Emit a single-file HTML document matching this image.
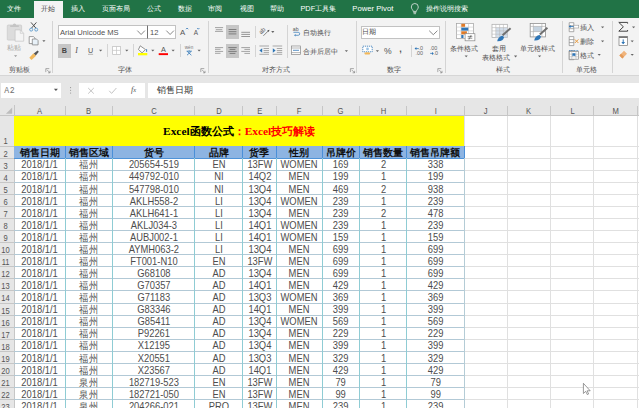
<!DOCTYPE html><html><head><meta charset="utf-8"><style>
*{margin:0;padding:0;box-sizing:border-box}
html,body{width:639px;height:408px;overflow:hidden;background:#fff;font-family:"Liberation Sans",sans-serif}
.ab{position:absolute}
.t{position:absolute;white-space:nowrap;line-height:1}
</style></head><body>
<div class="ab" style="left:0;top:0;width:639px;height:18px;background:#217346"></div>
<div class="ab" style="left:33.5px;top:1px;width:29.6px;height:18px;background:#F3F3F3"></div>
<div class="t" style="left:7px;top:5.2px;font-size:7.3px;color:#fff">文件</div>
<div class="t" style="left:40.5px;top:5.2px;font-size:7.3px;color:#444">开始</div>
<div class="t" style="left:71.2px;top:5.2px;font-size:7.3px;color:#fff">插入</div>
<div class="t" style="left:101.9px;top:5.2px;font-size:7.3px;color:#fff">页面布局</div>
<div class="t" style="left:146.5px;top:5.2px;font-size:7.3px;color:#fff">公式</div>
<div class="t" style="left:177.5px;top:5.2px;font-size:7.3px;color:#fff">数据</div>
<div class="t" style="left:208px;top:5.2px;font-size:7.3px;color:#fff">审阅</div>
<div class="t" style="left:239.5px;top:5.2px;font-size:7.3px;color:#fff">视图</div>
<div class="t" style="left:270px;top:5.2px;font-size:7.3px;color:#fff">帮助</div>
<div class="t" style="left:300.5px;top:5.2px;font-size:7.3px;color:#fff">PDF工具集</div>
<div class="t" style="left:352.3px;top:5.2px;font-size:7.7px;color:#fff">Power Pivot</div>
<div class="t" style="left:425.5px;top:5.2px;font-size:7.3px;color:#fff">操作说明搜索</div>
<div class="ab" style="left:0;top:18px;width:639px;height:57px;background:#F3F3F3"></div>
<div class="ab" style="left:0;top:74.6px;width:639px;height:1px;background:#D6D6D6"></div>
<div class="t" style="left:7.08px;top:43.82px;font-size:7.3px;color:#A8A8A8;">粘贴</div>
<div class="t" style="left:9.28px;top:65.72px;font-size:7.3px;color:#505050;">剪贴板</div>
<div class="ab" style="left:52.30px;top:21.00px;width:1px;height:52.00px;background:#D4D4D4"></div>
<div class="ab" style="left:58.3px;top:25.3px;width:89.3px;height:13.4px;background:#fff;border:0.8px solid #C2C2C2"></div>
<div class="ab" style="left:147.1px;top:25.3px;width:29.3px;height:13.4px;background:#fff;border:0.8px solid #C2C2C2;border-left:1px solid #707070"></div>
<div class="t" style="left:60.00px;top:28.90px;font-size:7.6px;color:#505050;">Arial Unicode MS</div>
<div class="t" style="left:150.00px;top:28.90px;font-size:7.6px;color:#505050;">12</div>
<div class="t" style="left:180.00px;top:28.60px;font-size:7.8px;color:#555;">A</div>
<div class="t" style="left:193.80px;top:30.00px;font-size:6.4px;color:#555;">A</div>
<div class="ab" style="left:58.3px;top:44px;width:12.5px;height:13.8px;background:#C6C6C6"></div>
<div class="t" style="left:61.80px;top:46.60px;font-size:7.2px;color:#444;font-weight:bold">B</div>
<div class="t" style="left:75.20px;top:47.20px;font-size:7.8px;color:#505050;font-style:italic;font-family:'Liberation Serif',serif">I</div>
<div class="t" style="left:88.00px;top:46.60px;font-size:7.2px;color:#555;">U</div>
<div class="ab" style="left:107.30px;top:44.30px;width:1px;height:12.70px;background:#D4D4D4"></div>
<div class="ab" style="left:133.40px;top:44.30px;width:1px;height:12.70px;background:#D4D4D4"></div>
<div class="t" style="left:161.00px;top:46.20px;font-size:7.3px;color:#555;">A</div>
<div class="ab" style="left:179.70px;top:44.30px;width:1px;height:12.70px;background:#D4D4D4"></div>
<div class="t" style="left:184.80px;top:45.80px;font-size:4.6px;color:#777;">wén</div>
<div class="t" style="left:117.78px;top:65.72px;font-size:7.3px;color:#505050;">字体</div>
<div class="ab" style="left:207.50px;top:21.00px;width:1px;height:52.00px;background:#D4D4D4"></div>
<div class="ab" style="left:226px;top:25.1px;width:13px;height:13.8px;background:#C6C6C6"></div>
<div class="ab" style="left:226px;top:43.9px;width:13px;height:13.7px;background:#C6C6C6"></div>
<div class="ab" style="left:255.20px;top:26.40px;width:1px;height:11.80px;background:#D4D4D4"></div>
<div class="ab" style="left:286.60px;top:24.50px;width:1px;height:33.00px;background:#D4D4D4"></div>
<div class="ab" style="left:255.20px;top:44.50px;width:1px;height:12.50px;background:#D4D4D4"></div>
<div class="t" style="left:292.80px;top:26.80px;font-size:5.2px;color:#555;">ab</div>
<div class="t" style="left:302.88px;top:29.22px;font-size:7.35px;color:#505050;">自动换行</div>
<div class="t" style="left:302.88px;top:47.52px;font-size:7.35px;color:#505050;">合并后居中</div>
<div class="t" style="left:261.78px;top:65.92px;font-size:7.3px;color:#505050;">对齐方式</div>
<div class="ab" style="left:355.60px;top:21.00px;width:1px;height:52.00px;background:#D4D4D4"></div>
<div class="ab" style="left:360.9px;top:25.5px;width:78.9px;height:13.4px;background:#fff;border:0.8px solid #C2C2C2"></div>
<div class="t" style="left:362.48px;top:28.24px;font-size:7.2px;color:#444;">日期</div>
<div class="t" style="left:384.00px;top:46.90px;font-size:8.6px;color:#555;">%</div>
<div class="t" style="left:399.20px;top:44.60px;font-size:9px;color:#555;font-weight:bold">,</div>
<div class="ab" style="left:410.60px;top:45.00px;width:1px;height:12.00px;background:#D4D4D4"></div>
<div class="t" style="left:418.60px;top:46.00px;font-size:5.4px;color:#666;">.0</div>
<div class="t" style="left:415.60px;top:50.60px;font-size:5.4px;color:#666;">.00</div>
<div class="t" style="left:429.80px;top:46.00px;font-size:5.4px;color:#666;">.00</div>
<div class="t" style="left:433.40px;top:50.60px;font-size:5.4px;color:#666;">.0</div>
<div class="t" style="left:387.48px;top:65.92px;font-size:7.3px;color:#505050;">数字</div>
<div class="ab" style="left:444.50px;top:21.00px;width:1px;height:52.00px;background:#D4D4D4"></div>
<div class="t" style="left:450.38px;top:44.52px;font-size:7.35px;color:#505050;">条件格式</div>
<div class="t" style="left:492.48px;top:44.52px;font-size:7.35px;color:#505050;">套用</div>
<div class="t" style="left:482.18px;top:53.62px;font-size:7.35px;color:#505050;">表格格式</div>
<div class="t" style="left:519.68px;top:44.52px;font-size:7.35px;color:#505050;">单元格样式</div>
<div class="t" style="left:495.58px;top:65.92px;font-size:7.3px;color:#505050;">样式</div>
<div class="ab" style="left:562.40px;top:21.00px;width:1px;height:52.00px;background:#D4D4D4"></div>
<div class="t" style="left:580.38px;top:23.92px;font-size:7.35px;color:#505050;">插入</div>
<div class="t" style="left:580.38px;top:37.92px;font-size:7.35px;color:#505050;">删除</div>
<div class="t" style="left:580.38px;top:51.72px;font-size:7.35px;color:#505050;">格式</div>
<div class="t" style="left:576.08px;top:65.52px;font-size:7.3px;color:#505050;">单元格</div>
<div class="ab" style="left:611.50px;top:21.00px;width:1px;height:52.00px;background:#D4D4D4"></div>
<svg class="ab" style="left:0;top:0" width="639" height="80" viewBox="0 0 639 80"><rect x="7.3" y="25" width="14.3" height="15.1" rx="0.8" fill="#DCDCDC" stroke="#C8C8C8" stroke-width="0.7"/><path d="M10.2 27V25.2h2.6a1.7 1.7 0 0 1 3.4 0h2.6V27z" fill="#C4C4C4"/><path d="M15.1 29.9h5.2l3.4 3.4v7.9h-8.6z" fill="#F4F4F4" stroke="#C4C4C4" stroke-width="0.7"/><path d="M20.3 29.9v3.4h3.4" fill="none" stroke="#C4C4C4" stroke-width="0.6"/><path d="M14.00 55.20h3.2l-1.6 1.8z" fill="#9A9A9A"/><path d="M31 22.4l4.8 5.6M36.4 22.4l-4.8 5.6" stroke="#505050" stroke-width="1"/><circle cx="31.2" cy="29.6" r="1.5" fill="none" stroke="#4A90C8" stroke-width="0.8"/><circle cx="36.2" cy="29.6" r="1.5" fill="none" stroke="#4A90C8" stroke-width="0.8"/><path d="M29.2 36.6h4.2l1.6 1.6v5.4h-5.8z" fill="#fff" stroke="#777" stroke-width="0.7"/><path d="M32.3 39h4.2l1.6 1.6v4.3h-5.8z" fill="#E8F1F8" stroke="#777" stroke-width="0.7"/><path d="M42.30 40.20h3.2l-1.6 1.8z" fill="#666"/><path d="M29.3 57.8l4.2-4.6 2.6 2.6-4.6 4.2z" fill="#F2B85A"/><path d="M33.8 53.5l3.8-3 1.2 1.2-3 3.8z" fill="#555"/><path d="M45.80 72.10v-3.5h3.5M47.00 69.80l3 3M50.00 70.80v2h-2" stroke="#777" stroke-width="0.6" fill="none"/><path d="M137.3 30.6l3.8 3.9 3.8-3.9" fill="none" stroke="#555" stroke-width="0.7"/><path d="M166.3 30.6l3.8 3.9 3.8-3.9" fill="none" stroke="#555" stroke-width="0.7"/><path d="M186 29.2l1.1-1.2 1.1 1.2" fill="none" stroke="#2E75B6" stroke-width="0.8"/><path d="M197.2 28l1.1 1.2 1.1-1.2" fill="none" stroke="#2E75B6" stroke-width="0.8"/><path d="M88 54.3h5.1" stroke="#888" stroke-width="0.6"/><path d="M99.00 49.80h3.2l-1.6 1.8z" fill="#666"/><rect x="112.6" y="46.4" width="7.8" height="8" fill="#fff" stroke="#C4C4C4" stroke-width="0.8"/><path d="M116.5 46.4v8M112.6 50.4h7.8" stroke="#C4C4C4" stroke-width="0.7"/><path d="M125.20 49.80h3.2l-1.6 1.8z" fill="#666"/><path d="M140.2 45.8l5.2 3.7-3.3 3.4-3.6-3.4z" fill="#fff" stroke="#666" stroke-width="0.7"/><path d="M146.6 49.2v2.6" stroke="#2E75B6" stroke-width="0.9"/><rect x="138" y="53" width="9.3" height="2.3" fill="#FFFF00"/><path d="M151.20 49.80h3.2l-1.6 1.8z" fill="#666"/><rect x="158.7" y="53.2" width="9.3" height="1.9" fill="#FF0000"/><path d="M171.50 49.80h3.2l-1.6 1.8z" fill="#666"/><path d="M186.6 51.2h5.2M189.2 50.4v1M187.2 51.4l4.2 3.8M191.2 51.4l-4.2 3.8" stroke="#2E75B6" stroke-width="0.8" fill="none"/><path d="M197.50 49.80h3.2l-1.6 1.8z" fill="#666"/><path d="M200.80 72.10v-3.5h3.5M202.00 69.80l3 3M205.00 70.80v2h-2" stroke="#777" stroke-width="0.6" fill="none"/><path d="M215 27.6h8.1M215.8 29.7h6.5M215 31.4h8.1" stroke="#888" stroke-width="0.75"/><path d="M228.6 29.5h7.8M228.6 31.7h7.8M228.6 33.9h7.8" stroke="#666" stroke-width="0.75"/><path d="M241.3 32.3h8.7M241.3 34.4h8.7M241.3 36.5h8.7" stroke="#777" stroke-width="0.75"/><text x="0" y="0" transform="translate(261.2 34.6) rotate(-45)" font-family="Liberation Sans" font-size="6" fill="#555">ab</text><path d="M263.4 35.8l5.6-5.6" stroke="#555" stroke-width="0.7" fill="none"/><path d="M269.4 29.8l-2.2 0.6 1.6 1.6z" fill="#555"/><path d="M271.20 31.10h3.2l-1.6 1.8z" fill="#666"/><path d="M215 47.6h8.1M215 49.3h5.5M215 51.4h8.1M215 53.3h5.5" stroke="#888" stroke-width="0.75"/><path d="M228.3 47.6h8.4M229.6 49.4h5.8M228.3 51.4h8.4M229.6 53.4h5.8" stroke="#666" stroke-width="0.75"/><path d="M241.3 47.6h8.7M244.4 49.4h5.6M241.3 51.4h8.7M244.4 53.4h5.6" stroke="#888" stroke-width="0.75"/><path d="M259.4 46h9.6M263.6 48.5h5.4M263.6 50.5h5.4M263.6 52.4h5.4M259.4 54.3h9.6" stroke="#888" stroke-width="0.7"/><path d="M259.4 50.5l2.8-2.2v4.4z" fill="#2E75B6"/><path d="M272.6 46h9.6M276.8 48.5h5.4M276.8 50.5h5.4M276.8 52.4h5.4M272.6 54.3h9.6" stroke="#888" stroke-width="0.7"/><path d="M275.6 50.5l-2.8-2.2v4.4z" fill="#2E75B6"/><path d="M293.4 32.3h4.8a1.5 1.5 0 0 1 0 3h-2.6" fill="none" stroke="#2E75B6" stroke-width="0.7"/><path d="M295.6 34.1v2.4l-1.5-1.2z" fill="#2E75B6"/><rect x="291.4" y="46" width="9.2" height="8.6" fill="#fff" stroke="#888" stroke-width="0.7"/><path d="M291.4 48h9.2M291.4 52.6h9.2" stroke="#888" stroke-width="0.6"/><path d="M293 50.3h6" stroke="#2E75B6" stroke-width="0.8"/><path d="M344.80 50.30h3.2l-1.6 1.8z" fill="#666"/><path d="M350.40 72.10v-3.5h3.5M351.60 69.80l3 3M354.60 70.80v2h-2" stroke="#777" stroke-width="0.6" fill="none"/><path d="M429.2 30.7l4.1 4 4.1-4" fill="none" stroke="#555" stroke-width="0.7"/><rect x="362.8" y="46.2" width="9.4" height="5.6" fill="#fff" stroke="#2E75B6" stroke-width="0.8" stroke-dasharray="1.2 0.8"/><circle cx="367.5" cy="49" r="1.4" fill="#9CC3E5"/><ellipse cx="367.3" cy="53.4" rx="3" ry="1.2" fill="#F2B85A"/><path d="M375.80 50.30h3.2l-1.6 1.8z" fill="#666"/><path d="M415.4 48.6h3.4" stroke="#2E75B6" stroke-width="0.8"/><path d="M414.6 48.6l1.8-1.5v3z" fill="#2E75B6"/><path d="M430.2 53.4h2.8" stroke="#2E75B6" stroke-width="0.8"/><path d="M433.8 53.4l-1.8-1.5v3z" fill="#2E75B6"/><path d="M437.80 72.10v-3.5h3.5M439.00 69.80l3 3M442.00 70.80v2h-2" stroke="#777" stroke-width="0.6" fill="none"/><rect x="456.5" y="23.4" width="17" height="15" fill="#fff" stroke="#A0A0A0" stroke-width="0.7"/><path d="M456.5 27.1h17M456.5 30.9h17M456.5 34.6h17M461.2 23.4v15M468.5 23.4v15" stroke="#C8C8C8" stroke-width="0.6"/><rect x="461.3" y="23.8" width="3.8" height="3" fill="#E07B28"/><rect x="461.3" y="27.6" width="7" height="3" fill="#2E75B6"/><rect x="461.3" y="31.3" width="5.6" height="3" fill="#E07B28"/><rect x="461.3" y="35" width="2.2" height="3" fill="#2E75B6"/><rect x="465.1" y="33.7" width="9.8" height="7.1" fill="#fff" stroke="#888" stroke-width="0.7"/><path d="M467.7 36.4h4.6M467.7 38.2h4.6M471.2 35l-2.3 4.6" stroke="#444" stroke-width="0.6"/><path d="M464.60 55.40h3.2l-1.6 1.8z" fill="#666"/><rect x="492" y="24.3" width="15.3" height="13.1" fill="#fff" stroke="#A8A8A8" stroke-width="0.7"/><rect x="495.8" y="27.6" width="11.5" height="9.8" fill="#D3DEEA"/><path d="M492 27.6h15.3M492 30.9h15.3M492 34.2h15.3M495.8 24.3v13.1M499.6 24.3v13.1M503.4 24.3v13.1" stroke="#B8B8B8" stroke-width="0.6"/><path d="M502.6 35.2l8-7" stroke="#707070" stroke-width="2"/><path d="M497.2 41.2c0.6-3 2.6-5 5.4-5.4l1.4 1.4c-0.5 2.8-2.6 4.2-6.8 4z" fill="#2E75B6"/><path d="M514.00 55.60h3.2l-1.6 1.8z" fill="#666"/><rect x="530.2" y="23.4" width="15.3" height="13.5" fill="#fff" stroke="#909090" stroke-width="0.8"/><rect x="533.3" y="26.4" width="8.6" height="5.2" fill="#C5D3E0"/><path d="M530.2 26.4h15.3M530.2 31.6h15.3M533.3 23.4v13.5M541.9 23.4v13.5" stroke="#A8A8A8" stroke-width="0.6"/><path d="M539.8 34.6l7.6-6.8" stroke="#707070" stroke-width="2"/><path d="M534.2 40.4c0.6-3 2.6-5 5.4-5.4l1.4 1.4c-0.5 2.8-2.6 4.2-6.8 4z" fill="#2E75B6"/><path d="M538.00 55.40h3.2l-1.6 1.8z" fill="#666"/><path d="M569.2 22.7h4.6v9h-4.6zM569.2 25.7h4.6M569.2 28.7h4.6" fill="#fff" stroke="#888" stroke-width="0.7"/><path d="M569.2 36.6h4.6v9h-4.6zM569.2 39.6h4.6M569.2 42.6h4.6" fill="#fff" stroke="#888" stroke-width="0.7"/><path d="M569.2 50.7h4.6v9h-4.6zM569.2 53.7h4.6M569.2 56.7h4.6" fill="#fff" stroke="#888" stroke-width="0.7"/><rect x="573.8" y="25.2" width="4.9" height="2.8" fill="#fff" stroke="#999" stroke-width="0.6"/><path d="M569.4 26.6h4.2" stroke="#2E75B6" stroke-width="0.9"/><path d="M568.8 26.6l1.8-1.5v3z" fill="#2E75B6"/><path d="M574.8 39.4l3.6 3.6M578.4 39.4l-3.6 3.6" stroke="#E89A3C" stroke-width="1"/><path d="M569.2 50.6h9.4" stroke="#2E75B6" stroke-width="0.8" stroke-dasharray="1 0.6"/><rect x="569.2" y="51.6" width="9.4" height="7.6" fill="#fff" stroke="#888" stroke-width="0.7"/><path d="M569.2 54.2h9.4M569.2 56.8h9.4M571.8 51.6v7.6M576 51.6v7.6" stroke="#AAA" stroke-width="0.5"/><path d="M572.4 53.2h3v3.4l-1.5-1-1.5 1z" fill="#2E75B6"/><path d="M601.00 26.50h3.2l-1.6 1.8z" fill="#666"/><path d="M601.00 40.40h3.2l-1.6 1.8z" fill="#666"/><path d="M597.60 54.00h3.2l-1.6 1.8z" fill="#666"/><path d="M627.6 23.6v-1.2h-8.8l4.6 4.4-4.6 4.4h8.8v-1.2" fill="none" stroke="#444" stroke-width="1.0"/><path d="M632.00 26.50h3.2l-1.6 1.8z" fill="#666"/><rect x="619" y="36.4" width="8.4" height="9.2" fill="#fff" stroke="#777" stroke-width="0.7"/><rect x="619" y="36.4" width="8.4" height="1.6" fill="#777"/><path d="M623.2 39.4v4.2" stroke="#2E75B6" stroke-width="1"/><path d="M621.3 42l1.9 2.3 1.9-2.3z" fill="#2E75B6"/><path d="M630.60 40.40h3.2l-1.6 1.8z" fill="#666"/><path d="M619.4 55.4l4.6-4.6 3 3-4.6 4.6z" fill="#F0B47C"/><path d="M619.4 55.4l1.6-1.6 3 3-1.6 1.6z" fill="#E39A5A"/><path d="M630.60 54.00h3.2l-1.6 1.8z" fill="#666"/></svg>
<div class="ab" style="left:0;top:75.5px;width:639px;height:30px;background:#E6E6E6"></div>
<div class="ab" style="left:1px;top:82.6px;width:60.1px;height:15.4px;background:#fff"></div>
<div class="ab" style="left:79.2px;top:82.6px;width:66px;height:15.4px;background:#fff"></div>
<div class="ab" style="left:147.7px;top:82.6px;width:500px;height:15.4px;background:#fff"></div>
<div class="t" style="left:4.3px;top:87.4px;font-size:8.2px;color:#707070;letter-spacing:0.6px;font-family:'Liberation Mono',monospace">A2</div>
<div class="t" style="left:156.6px;top:86.0px;font-size:9px;color:#333">销售日期</div>
<svg class="ab" style="left:0;top:76px" width="160" height="26" viewBox="0 76 160 26"><path d="M53.9 88.7h4l-2 2.2z" fill="#555"/><circle cx="70.6" cy="87.6" r="0.55" fill="#888"/><circle cx="70.6" cy="90.3" r="0.55" fill="#888"/><circle cx="70.6" cy="93" r="0.55" fill="#888"/><path d="M88.2 88l5.6 5.6M93.8 88l-5.6 5.6" stroke="#B4B4B4" stroke-width="0.8"/><path d="M109.2 90.8l2.4 2.6 4.8-5.4" fill="none" stroke="#B4B4B4" stroke-width="0.8"/></svg>
<div class="t" style="left:131.0px;top:86.0px;font-size:8.4px;color:#555;font-style:italic;font-family:'Liberation Serif',serif">f<span style="font-size:6.5px">x</span></div>
<div class="ab" style="left:0;top:105px;width:639px;height:11px;background:#E6E6E6"></div>
<div class="ab" style="left:0;top:105px;width:14.3px;height:303px;background:#E6E6E6"></div>
<div class="ab" style="left:14.3px;top:116px;width:625px;height:292px;background:#fff"></div>
<div class="ab" style="left:0;top:115px;width:639px;height:1px;background:#C6C6C6"></div>
<div class="ab" style="left:14px;top:105px;width:1px;height:303px;background:#C6C6C6"></div>
<svg class="ab" style="left:0;top:100px" width="16" height="16" viewBox="0 100 16 16"><path d="M12.2 107.5v6.3h-6.3z" fill="#BDBDBD"/></svg>
<div class="t" style="left:14.3px;width:51.10000000000001px;text-align:center;top:107.0px;font-size:8.9px;color:#555;transform:scaleX(0.86)">A</div>
<div class="ab" style="left:64.9px;top:105.5px;width:1px;height:10px;background:#C6C6C6"></div>
<div class="t" style="left:65.4px;width:47.3px;text-align:center;top:107.0px;font-size:8.9px;color:#555;transform:scaleX(0.86)">B</div>
<div class="ab" style="left:112.2px;top:105.5px;width:1px;height:10px;background:#C6C6C6"></div>
<div class="t" style="left:112.7px;width:81.8px;text-align:center;top:107.0px;font-size:8.9px;color:#555;transform:scaleX(0.86)">C</div>
<div class="ab" style="left:194.0px;top:105.5px;width:1px;height:10px;background:#C6C6C6"></div>
<div class="t" style="left:194.5px;width:48.0px;text-align:center;top:107.0px;font-size:8.9px;color:#555;transform:scaleX(0.86)">D</div>
<div class="ab" style="left:242.0px;top:105.5px;width:1px;height:10px;background:#C6C6C6"></div>
<div class="t" style="left:242.5px;width:33.80000000000001px;text-align:center;top:107.0px;font-size:8.9px;color:#555;transform:scaleX(0.86)">E</div>
<div class="ab" style="left:275.8px;top:105.5px;width:1px;height:10px;background:#C6C6C6"></div>
<div class="t" style="left:276.3px;width:46.0px;text-align:center;top:107.0px;font-size:8.9px;color:#555;transform:scaleX(0.86)">F</div>
<div class="ab" style="left:321.8px;top:105.5px;width:1px;height:10px;background:#C6C6C6"></div>
<div class="t" style="left:322.3px;width:37.19999999999999px;text-align:center;top:107.0px;font-size:8.9px;color:#555;transform:scaleX(0.86)">G</div>
<div class="ab" style="left:359.0px;top:105.5px;width:1px;height:10px;background:#C6C6C6"></div>
<div class="t" style="left:359.5px;width:47.10000000000002px;text-align:center;top:107.0px;font-size:8.9px;color:#555;transform:scaleX(0.86)">H</div>
<div class="ab" style="left:406.1px;top:105.5px;width:1px;height:10px;background:#C6C6C6"></div>
<div class="t" style="left:406.6px;width:57.39999999999998px;text-align:center;top:107.0px;font-size:8.9px;color:#555;transform:scaleX(0.86)">I</div>
<div class="ab" style="left:463.5px;top:105.5px;width:1px;height:10px;background:#C6C6C6"></div>
<div class="t" style="left:464.0px;width:43.30000000000001px;text-align:center;top:107.0px;font-size:8.9px;color:#555;transform:scaleX(0.86)">J</div>
<div class="ab" style="left:506.8px;top:105.5px;width:1px;height:10px;background:#C6C6C6"></div>
<div class="t" style="left:507.3px;width:43.30000000000001px;text-align:center;top:107.0px;font-size:8.9px;color:#555;transform:scaleX(0.86)">K</div>
<div class="ab" style="left:550.1px;top:105.5px;width:1px;height:10px;background:#C6C6C6"></div>
<div class="t" style="left:550.6px;width:43.299999999999955px;text-align:center;top:107.0px;font-size:8.9px;color:#555;transform:scaleX(0.86)">L</div>
<div class="ab" style="left:593.4px;top:105.5px;width:1px;height:10px;background:#C6C6C6"></div>
<div class="t" style="left:593.9px;width:43.30000000000007px;text-align:center;top:107.0px;font-size:8.9px;color:#555;transform:scaleX(0.86)">M</div>
<div class="ab" style="left:636.7px;top:105.5px;width:1px;height:10px;background:#C6C6C6"></div>
<div class="ab" style="left:463.5px;top:116px;width:1px;height:292px;background:#E0E0E0"></div>
<div class="ab" style="left:506.8px;top:116px;width:1px;height:292px;background:#E0E0E0"></div>
<div class="ab" style="left:550.1px;top:116px;width:1px;height:292px;background:#E0E0E0"></div>
<div class="ab" style="left:593.4px;top:116px;width:1px;height:292px;background:#E0E0E0"></div>
<div class="ab" style="left:636.7px;top:116px;width:1px;height:292px;background:#E0E0E0"></div>
<div class="ab" style="left:14.3px;top:145.5px;width:625px;height:1px;background:#E0E0E0"></div>
<div class="ab" style="left:14.3px;top:157.7px;width:625px;height:1px;background:#E0E0E0"></div>
<div class="ab" style="left:14.3px;top:169.76999999999998px;width:625px;height:1px;background:#E0E0E0"></div>
<div class="ab" style="left:14.3px;top:181.83999999999997px;width:625px;height:1px;background:#E0E0E0"></div>
<div class="ab" style="left:14.3px;top:193.91px;width:625px;height:1px;background:#E0E0E0"></div>
<div class="ab" style="left:14.3px;top:205.98px;width:625px;height:1px;background:#E0E0E0"></div>
<div class="ab" style="left:14.3px;top:218.04999999999998px;width:625px;height:1px;background:#E0E0E0"></div>
<div class="ab" style="left:14.3px;top:230.12px;width:625px;height:1px;background:#E0E0E0"></div>
<div class="ab" style="left:14.3px;top:242.19px;width:625px;height:1px;background:#E0E0E0"></div>
<div class="ab" style="left:14.3px;top:254.26px;width:625px;height:1px;background:#E0E0E0"></div>
<div class="ab" style="left:14.3px;top:266.33px;width:625px;height:1px;background:#E0E0E0"></div>
<div class="ab" style="left:14.3px;top:278.4px;width:625px;height:1px;background:#E0E0E0"></div>
<div class="ab" style="left:14.3px;top:290.47px;width:625px;height:1px;background:#E0E0E0"></div>
<div class="ab" style="left:14.3px;top:302.53999999999996px;width:625px;height:1px;background:#E0E0E0"></div>
<div class="ab" style="left:14.3px;top:314.61px;width:625px;height:1px;background:#E0E0E0"></div>
<div class="ab" style="left:14.3px;top:326.68px;width:625px;height:1px;background:#E0E0E0"></div>
<div class="ab" style="left:14.3px;top:338.75px;width:625px;height:1px;background:#E0E0E0"></div>
<div class="ab" style="left:14.3px;top:350.82px;width:625px;height:1px;background:#E0E0E0"></div>
<div class="ab" style="left:14.3px;top:362.89px;width:625px;height:1px;background:#E0E0E0"></div>
<div class="ab" style="left:14.3px;top:374.96px;width:625px;height:1px;background:#E0E0E0"></div>
<div class="ab" style="left:14.3px;top:387.03px;width:625px;height:1px;background:#E0E0E0"></div>
<div class="ab" style="left:14.3px;top:399.1px;width:625px;height:1px;background:#E0E0E0"></div>
<div class="ab" style="left:14.3px;top:411.16999999999996px;width:625px;height:1px;background:#E0E0E0"></div>
<div class="ab" style="left:0;top:145.5px;width:14px;height:1px;background:#C6C6C6"></div>
<div class="t" style="left:0;width:11.2px;text-align:center;top:137.40px;font-size:8.8px;color:#555;transform:scaleX(0.86)">1</div>
<div class="ab" style="left:0;top:157.7px;width:14px;height:1px;background:#C6C6C6"></div>
<div class="t" style="left:0;width:11.2px;text-align:center;top:149.60px;font-size:8.8px;color:#555;transform:scaleX(0.86)">2</div>
<div class="ab" style="left:0;top:169.76999999999998px;width:14px;height:1px;background:#C6C6C6"></div>
<div class="t" style="left:0;width:11.2px;text-align:center;top:161.67px;font-size:8.8px;color:#555;transform:scaleX(0.86)">3</div>
<div class="ab" style="left:0;top:181.83999999999997px;width:14px;height:1px;background:#C6C6C6"></div>
<div class="t" style="left:0;width:11.2px;text-align:center;top:173.74px;font-size:8.8px;color:#555;transform:scaleX(0.86)">4</div>
<div class="ab" style="left:0;top:193.91px;width:14px;height:1px;background:#C6C6C6"></div>
<div class="t" style="left:0;width:11.2px;text-align:center;top:185.81px;font-size:8.8px;color:#555;transform:scaleX(0.86)">5</div>
<div class="ab" style="left:0;top:205.98px;width:14px;height:1px;background:#C6C6C6"></div>
<div class="t" style="left:0;width:11.2px;text-align:center;top:197.88px;font-size:8.8px;color:#555;transform:scaleX(0.86)">6</div>
<div class="ab" style="left:0;top:218.04999999999998px;width:14px;height:1px;background:#C6C6C6"></div>
<div class="t" style="left:0;width:11.2px;text-align:center;top:209.95px;font-size:8.8px;color:#555;transform:scaleX(0.86)">7</div>
<div class="ab" style="left:0;top:230.12px;width:14px;height:1px;background:#C6C6C6"></div>
<div class="t" style="left:0;width:11.2px;text-align:center;top:222.02px;font-size:8.8px;color:#555;transform:scaleX(0.86)">8</div>
<div class="ab" style="left:0;top:242.19px;width:14px;height:1px;background:#C6C6C6"></div>
<div class="t" style="left:0;width:11.2px;text-align:center;top:234.09px;font-size:8.8px;color:#555;transform:scaleX(0.86)">9</div>
<div class="ab" style="left:0;top:254.26px;width:14px;height:1px;background:#C6C6C6"></div>
<div class="t" style="left:0;width:11.2px;text-align:center;top:246.16px;font-size:8.8px;color:#555;transform:scaleX(0.86)">10</div>
<div class="ab" style="left:0;top:266.33px;width:14px;height:1px;background:#C6C6C6"></div>
<div class="t" style="left:0;width:11.2px;text-align:center;top:258.23px;font-size:8.8px;color:#555;transform:scaleX(0.86)">11</div>
<div class="ab" style="left:0;top:278.4px;width:14px;height:1px;background:#C6C6C6"></div>
<div class="t" style="left:0;width:11.2px;text-align:center;top:270.30px;font-size:8.8px;color:#555;transform:scaleX(0.86)">12</div>
<div class="ab" style="left:0;top:290.47px;width:14px;height:1px;background:#C6C6C6"></div>
<div class="t" style="left:0;width:11.2px;text-align:center;top:282.37px;font-size:8.8px;color:#555;transform:scaleX(0.86)">13</div>
<div class="ab" style="left:0;top:302.53999999999996px;width:14px;height:1px;background:#C6C6C6"></div>
<div class="t" style="left:0;width:11.2px;text-align:center;top:294.44px;font-size:8.8px;color:#555;transform:scaleX(0.86)">14</div>
<div class="ab" style="left:0;top:314.61px;width:14px;height:1px;background:#C6C6C6"></div>
<div class="t" style="left:0;width:11.2px;text-align:center;top:306.51px;font-size:8.8px;color:#555;transform:scaleX(0.86)">15</div>
<div class="ab" style="left:0;top:326.68px;width:14px;height:1px;background:#C6C6C6"></div>
<div class="t" style="left:0;width:11.2px;text-align:center;top:318.58px;font-size:8.8px;color:#555;transform:scaleX(0.86)">16</div>
<div class="ab" style="left:0;top:338.75px;width:14px;height:1px;background:#C6C6C6"></div>
<div class="t" style="left:0;width:11.2px;text-align:center;top:330.65px;font-size:8.8px;color:#555;transform:scaleX(0.86)">17</div>
<div class="ab" style="left:0;top:350.82px;width:14px;height:1px;background:#C6C6C6"></div>
<div class="t" style="left:0;width:11.2px;text-align:center;top:342.72px;font-size:8.8px;color:#555;transform:scaleX(0.86)">18</div>
<div class="ab" style="left:0;top:362.89px;width:14px;height:1px;background:#C6C6C6"></div>
<div class="t" style="left:0;width:11.2px;text-align:center;top:354.79px;font-size:8.8px;color:#555;transform:scaleX(0.86)">19</div>
<div class="ab" style="left:0;top:374.96px;width:14px;height:1px;background:#C6C6C6"></div>
<div class="t" style="left:0;width:11.2px;text-align:center;top:366.86px;font-size:8.8px;color:#555;transform:scaleX(0.86)">20</div>
<div class="ab" style="left:0;top:387.03px;width:14px;height:1px;background:#C6C6C6"></div>
<div class="t" style="left:0;width:11.2px;text-align:center;top:378.93px;font-size:8.8px;color:#555;transform:scaleX(0.86)">21</div>
<div class="ab" style="left:0;top:399.1px;width:14px;height:1px;background:#C6C6C6"></div>
<div class="t" style="left:0;width:11.2px;text-align:center;top:391.00px;font-size:8.8px;color:#555;transform:scaleX(0.86)">22</div>
<div class="ab" style="left:0;top:411.16999999999996px;width:14px;height:1px;background:#C6C6C6"></div>
<div class="t" style="left:0;width:11.2px;text-align:center;top:403.07px;font-size:8.8px;color:#555;transform:scaleX(0.86)">23</div>
<div class="ab" style="left:14.3px;top:115.6px;width:449.7px;height:30.400000000000006px;background:#FFFF00"></div>
<div class="t" style="left:14.3px;width:449.7px;text-align:center;top:126.0px;font-size:11.4px;font-weight:bold;font-family:'Liberation Serif',serif;color:#000">Excel函数公式<span style="color:#FF0000">：Excel技巧解读</span></div>
<div class="ab" style="left:14.3px;top:146.0px;width:449.7px;height:12.199999999999989px;background:#8DB4E2"></div>
<div class="t" style="left:14.3px;width:51.10000000000001px;text-align:center;top:147.7px;font-size:9.9px;font-weight:bold;color:#111">销售日期</div>
<div class="t" style="left:65.4px;width:47.3px;text-align:center;top:147.7px;font-size:9.9px;font-weight:bold;color:#111">销售区域</div>
<div class="t" style="left:112.7px;width:81.8px;text-align:center;top:147.7px;font-size:9.9px;font-weight:bold;color:#111">货号</div>
<div class="t" style="left:194.5px;width:48.0px;text-align:center;top:147.7px;font-size:9.9px;font-weight:bold;color:#111">品牌</div>
<div class="t" style="left:242.5px;width:33.80000000000001px;text-align:center;top:147.7px;font-size:9.9px;font-weight:bold;color:#111">货季</div>
<div class="t" style="left:276.3px;width:46.0px;text-align:center;top:147.7px;font-size:9.9px;font-weight:bold;color:#111">性别</div>
<div class="t" style="left:322.3px;width:37.19999999999999px;text-align:center;top:147.7px;font-size:9.9px;font-weight:bold;color:#111">吊牌价</div>
<div class="t" style="left:359.5px;width:47.10000000000002px;text-align:center;top:147.7px;font-size:9.9px;font-weight:bold;color:#111">销售数量</div>
<div class="t" style="left:406.6px;width:57.39999999999998px;text-align:center;top:147.7px;font-size:9.9px;font-weight:bold;color:#111">销售吊牌额</div>
<div class="t" style="left:14.3px;width:51.10000000000001px;text-align:center;top:160.40px;font-size:10.2px;color:#4D4D4D;transform:scaleX(0.92)">2018/1/1</div>
<div class="t" style="left:65.4px;width:47.3px;text-align:center;top:160.40px;font-size:10.2px;color:#4D4D4D;transform:scaleX(0.92)">福州</div>
<div class="t" style="left:112.7px;width:81.8px;text-align:center;top:160.40px;font-size:10.2px;color:#4D4D4D;transform:scaleX(0.92)">205654-519</div>
<div class="t" style="left:194.5px;width:48.0px;text-align:center;top:160.40px;font-size:10.2px;color:#4D4D4D;transform:scaleX(0.92)">EN</div>
<div class="t" style="left:242.5px;width:33.80000000000001px;text-align:center;top:160.40px;font-size:10.2px;color:#4D4D4D;transform:scaleX(0.92)">13FW</div>
<div class="t" style="left:276.3px;width:46.0px;text-align:center;top:160.40px;font-size:10.2px;color:#4D4D4D;transform:scaleX(0.92)">WOMEN</div>
<div class="t" style="left:322.3px;width:37.19999999999999px;text-align:center;top:160.40px;font-size:10.2px;color:#4D4D4D;transform:scaleX(0.92)">169</div>
<div class="t" style="left:359.5px;width:47.10000000000002px;text-align:center;top:160.40px;font-size:10.2px;color:#4D4D4D;transform:scaleX(0.92)">2</div>
<div class="t" style="left:406.6px;width:57.39999999999998px;text-align:center;top:160.40px;font-size:10.2px;color:#4D4D4D;transform:scaleX(0.92)">338</div>
<div class="t" style="left:14.3px;width:51.10000000000001px;text-align:center;top:172.47px;font-size:10.2px;color:#4D4D4D;transform:scaleX(0.92)">2018/1/1</div>
<div class="t" style="left:65.4px;width:47.3px;text-align:center;top:172.47px;font-size:10.2px;color:#4D4D4D;transform:scaleX(0.92)">福州</div>
<div class="t" style="left:112.7px;width:81.8px;text-align:center;top:172.47px;font-size:10.2px;color:#4D4D4D;transform:scaleX(0.92)">449792-010</div>
<div class="t" style="left:194.5px;width:48.0px;text-align:center;top:172.47px;font-size:10.2px;color:#4D4D4D;transform:scaleX(0.92)">NI</div>
<div class="t" style="left:242.5px;width:33.80000000000001px;text-align:center;top:172.47px;font-size:10.2px;color:#4D4D4D;transform:scaleX(0.92)">14Q2</div>
<div class="t" style="left:276.3px;width:46.0px;text-align:center;top:172.47px;font-size:10.2px;color:#4D4D4D;transform:scaleX(0.92)">MEN</div>
<div class="t" style="left:322.3px;width:37.19999999999999px;text-align:center;top:172.47px;font-size:10.2px;color:#4D4D4D;transform:scaleX(0.92)">199</div>
<div class="t" style="left:359.5px;width:47.10000000000002px;text-align:center;top:172.47px;font-size:10.2px;color:#4D4D4D;transform:scaleX(0.92)">1</div>
<div class="t" style="left:406.6px;width:57.39999999999998px;text-align:center;top:172.47px;font-size:10.2px;color:#4D4D4D;transform:scaleX(0.92)">199</div>
<div class="t" style="left:14.3px;width:51.10000000000001px;text-align:center;top:184.54px;font-size:10.2px;color:#4D4D4D;transform:scaleX(0.92)">2018/1/1</div>
<div class="t" style="left:65.4px;width:47.3px;text-align:center;top:184.54px;font-size:10.2px;color:#4D4D4D;transform:scaleX(0.92)">福州</div>
<div class="t" style="left:112.7px;width:81.8px;text-align:center;top:184.54px;font-size:10.2px;color:#4D4D4D;transform:scaleX(0.92)">547798-010</div>
<div class="t" style="left:194.5px;width:48.0px;text-align:center;top:184.54px;font-size:10.2px;color:#4D4D4D;transform:scaleX(0.92)">NI</div>
<div class="t" style="left:242.5px;width:33.80000000000001px;text-align:center;top:184.54px;font-size:10.2px;color:#4D4D4D;transform:scaleX(0.92)">13Q4</div>
<div class="t" style="left:276.3px;width:46.0px;text-align:center;top:184.54px;font-size:10.2px;color:#4D4D4D;transform:scaleX(0.92)">MEN</div>
<div class="t" style="left:322.3px;width:37.19999999999999px;text-align:center;top:184.54px;font-size:10.2px;color:#4D4D4D;transform:scaleX(0.92)">469</div>
<div class="t" style="left:359.5px;width:47.10000000000002px;text-align:center;top:184.54px;font-size:10.2px;color:#4D4D4D;transform:scaleX(0.92)">2</div>
<div class="t" style="left:406.6px;width:57.39999999999998px;text-align:center;top:184.54px;font-size:10.2px;color:#4D4D4D;transform:scaleX(0.92)">938</div>
<div class="t" style="left:14.3px;width:51.10000000000001px;text-align:center;top:196.61px;font-size:10.2px;color:#4D4D4D;transform:scaleX(0.92)">2018/1/1</div>
<div class="t" style="left:65.4px;width:47.3px;text-align:center;top:196.61px;font-size:10.2px;color:#4D4D4D;transform:scaleX(0.92)">福州</div>
<div class="t" style="left:112.7px;width:81.8px;text-align:center;top:196.61px;font-size:10.2px;color:#4D4D4D;transform:scaleX(0.92)">AKLH558-2</div>
<div class="t" style="left:194.5px;width:48.0px;text-align:center;top:196.61px;font-size:10.2px;color:#4D4D4D;transform:scaleX(0.92)">LI</div>
<div class="t" style="left:242.5px;width:33.80000000000001px;text-align:center;top:196.61px;font-size:10.2px;color:#4D4D4D;transform:scaleX(0.92)">13Q4</div>
<div class="t" style="left:276.3px;width:46.0px;text-align:center;top:196.61px;font-size:10.2px;color:#4D4D4D;transform:scaleX(0.92)">WOMEN</div>
<div class="t" style="left:322.3px;width:37.19999999999999px;text-align:center;top:196.61px;font-size:10.2px;color:#4D4D4D;transform:scaleX(0.92)">239</div>
<div class="t" style="left:359.5px;width:47.10000000000002px;text-align:center;top:196.61px;font-size:10.2px;color:#4D4D4D;transform:scaleX(0.92)">1</div>
<div class="t" style="left:406.6px;width:57.39999999999998px;text-align:center;top:196.61px;font-size:10.2px;color:#4D4D4D;transform:scaleX(0.92)">239</div>
<div class="t" style="left:14.3px;width:51.10000000000001px;text-align:center;top:208.68px;font-size:10.2px;color:#4D4D4D;transform:scaleX(0.92)">2018/1/1</div>
<div class="t" style="left:65.4px;width:47.3px;text-align:center;top:208.68px;font-size:10.2px;color:#4D4D4D;transform:scaleX(0.92)">福州</div>
<div class="t" style="left:112.7px;width:81.8px;text-align:center;top:208.68px;font-size:10.2px;color:#4D4D4D;transform:scaleX(0.92)">AKLH641-1</div>
<div class="t" style="left:194.5px;width:48.0px;text-align:center;top:208.68px;font-size:10.2px;color:#4D4D4D;transform:scaleX(0.92)">LI</div>
<div class="t" style="left:242.5px;width:33.80000000000001px;text-align:center;top:208.68px;font-size:10.2px;color:#4D4D4D;transform:scaleX(0.92)">13Q4</div>
<div class="t" style="left:276.3px;width:46.0px;text-align:center;top:208.68px;font-size:10.2px;color:#4D4D4D;transform:scaleX(0.92)">MEN</div>
<div class="t" style="left:322.3px;width:37.19999999999999px;text-align:center;top:208.68px;font-size:10.2px;color:#4D4D4D;transform:scaleX(0.92)">239</div>
<div class="t" style="left:359.5px;width:47.10000000000002px;text-align:center;top:208.68px;font-size:10.2px;color:#4D4D4D;transform:scaleX(0.92)">2</div>
<div class="t" style="left:406.6px;width:57.39999999999998px;text-align:center;top:208.68px;font-size:10.2px;color:#4D4D4D;transform:scaleX(0.92)">478</div>
<div class="t" style="left:14.3px;width:51.10000000000001px;text-align:center;top:220.75px;font-size:10.2px;color:#4D4D4D;transform:scaleX(0.92)">2018/1/1</div>
<div class="t" style="left:65.4px;width:47.3px;text-align:center;top:220.75px;font-size:10.2px;color:#4D4D4D;transform:scaleX(0.92)">福州</div>
<div class="t" style="left:112.7px;width:81.8px;text-align:center;top:220.75px;font-size:10.2px;color:#4D4D4D;transform:scaleX(0.92)">AKLJ034-3</div>
<div class="t" style="left:194.5px;width:48.0px;text-align:center;top:220.75px;font-size:10.2px;color:#4D4D4D;transform:scaleX(0.92)">LI</div>
<div class="t" style="left:242.5px;width:33.80000000000001px;text-align:center;top:220.75px;font-size:10.2px;color:#4D4D4D;transform:scaleX(0.92)">14Q1</div>
<div class="t" style="left:276.3px;width:46.0px;text-align:center;top:220.75px;font-size:10.2px;color:#4D4D4D;transform:scaleX(0.92)">WOMEN</div>
<div class="t" style="left:322.3px;width:37.19999999999999px;text-align:center;top:220.75px;font-size:10.2px;color:#4D4D4D;transform:scaleX(0.92)">239</div>
<div class="t" style="left:359.5px;width:47.10000000000002px;text-align:center;top:220.75px;font-size:10.2px;color:#4D4D4D;transform:scaleX(0.92)">1</div>
<div class="t" style="left:406.6px;width:57.39999999999998px;text-align:center;top:220.75px;font-size:10.2px;color:#4D4D4D;transform:scaleX(0.92)">239</div>
<div class="t" style="left:14.3px;width:51.10000000000001px;text-align:center;top:232.82px;font-size:10.2px;color:#4D4D4D;transform:scaleX(0.92)">2018/1/1</div>
<div class="t" style="left:65.4px;width:47.3px;text-align:center;top:232.82px;font-size:10.2px;color:#4D4D4D;transform:scaleX(0.92)">福州</div>
<div class="t" style="left:112.7px;width:81.8px;text-align:center;top:232.82px;font-size:10.2px;color:#4D4D4D;transform:scaleX(0.92)">AUBJ002-1</div>
<div class="t" style="left:194.5px;width:48.0px;text-align:center;top:232.82px;font-size:10.2px;color:#4D4D4D;transform:scaleX(0.92)">LI</div>
<div class="t" style="left:242.5px;width:33.80000000000001px;text-align:center;top:232.82px;font-size:10.2px;color:#4D4D4D;transform:scaleX(0.92)">14Q1</div>
<div class="t" style="left:276.3px;width:46.0px;text-align:center;top:232.82px;font-size:10.2px;color:#4D4D4D;transform:scaleX(0.92)">WOMEN</div>
<div class="t" style="left:322.3px;width:37.19999999999999px;text-align:center;top:232.82px;font-size:10.2px;color:#4D4D4D;transform:scaleX(0.92)">159</div>
<div class="t" style="left:359.5px;width:47.10000000000002px;text-align:center;top:232.82px;font-size:10.2px;color:#4D4D4D;transform:scaleX(0.92)">1</div>
<div class="t" style="left:406.6px;width:57.39999999999998px;text-align:center;top:232.82px;font-size:10.2px;color:#4D4D4D;transform:scaleX(0.92)">159</div>
<div class="t" style="left:14.3px;width:51.10000000000001px;text-align:center;top:244.89px;font-size:10.2px;color:#4D4D4D;transform:scaleX(0.92)">2018/1/1</div>
<div class="t" style="left:65.4px;width:47.3px;text-align:center;top:244.89px;font-size:10.2px;color:#4D4D4D;transform:scaleX(0.92)">福州</div>
<div class="t" style="left:112.7px;width:81.8px;text-align:center;top:244.89px;font-size:10.2px;color:#4D4D4D;transform:scaleX(0.92)">AYMH063-2</div>
<div class="t" style="left:194.5px;width:48.0px;text-align:center;top:244.89px;font-size:10.2px;color:#4D4D4D;transform:scaleX(0.92)">LI</div>
<div class="t" style="left:242.5px;width:33.80000000000001px;text-align:center;top:244.89px;font-size:10.2px;color:#4D4D4D;transform:scaleX(0.92)">13Q4</div>
<div class="t" style="left:276.3px;width:46.0px;text-align:center;top:244.89px;font-size:10.2px;color:#4D4D4D;transform:scaleX(0.92)">MEN</div>
<div class="t" style="left:322.3px;width:37.19999999999999px;text-align:center;top:244.89px;font-size:10.2px;color:#4D4D4D;transform:scaleX(0.92)">699</div>
<div class="t" style="left:359.5px;width:47.10000000000002px;text-align:center;top:244.89px;font-size:10.2px;color:#4D4D4D;transform:scaleX(0.92)">1</div>
<div class="t" style="left:406.6px;width:57.39999999999998px;text-align:center;top:244.89px;font-size:10.2px;color:#4D4D4D;transform:scaleX(0.92)">699</div>
<div class="t" style="left:14.3px;width:51.10000000000001px;text-align:center;top:256.96px;font-size:10.2px;color:#4D4D4D;transform:scaleX(0.92)">2018/1/1</div>
<div class="t" style="left:65.4px;width:47.3px;text-align:center;top:256.96px;font-size:10.2px;color:#4D4D4D;transform:scaleX(0.92)">福州</div>
<div class="t" style="left:112.7px;width:81.8px;text-align:center;top:256.96px;font-size:10.2px;color:#4D4D4D;transform:scaleX(0.92)">FT001-N10</div>
<div class="t" style="left:194.5px;width:48.0px;text-align:center;top:256.96px;font-size:10.2px;color:#4D4D4D;transform:scaleX(0.92)">EN</div>
<div class="t" style="left:242.5px;width:33.80000000000001px;text-align:center;top:256.96px;font-size:10.2px;color:#4D4D4D;transform:scaleX(0.92)">13FW</div>
<div class="t" style="left:276.3px;width:46.0px;text-align:center;top:256.96px;font-size:10.2px;color:#4D4D4D;transform:scaleX(0.92)">MEN</div>
<div class="t" style="left:322.3px;width:37.19999999999999px;text-align:center;top:256.96px;font-size:10.2px;color:#4D4D4D;transform:scaleX(0.92)">699</div>
<div class="t" style="left:359.5px;width:47.10000000000002px;text-align:center;top:256.96px;font-size:10.2px;color:#4D4D4D;transform:scaleX(0.92)">1</div>
<div class="t" style="left:406.6px;width:57.39999999999998px;text-align:center;top:256.96px;font-size:10.2px;color:#4D4D4D;transform:scaleX(0.92)">699</div>
<div class="t" style="left:14.3px;width:51.10000000000001px;text-align:center;top:269.03px;font-size:10.2px;color:#4D4D4D;transform:scaleX(0.92)">2018/1/1</div>
<div class="t" style="left:65.4px;width:47.3px;text-align:center;top:269.03px;font-size:10.2px;color:#4D4D4D;transform:scaleX(0.92)">福州</div>
<div class="t" style="left:112.7px;width:81.8px;text-align:center;top:269.03px;font-size:10.2px;color:#4D4D4D;transform:scaleX(0.92)">G68108</div>
<div class="t" style="left:194.5px;width:48.0px;text-align:center;top:269.03px;font-size:10.2px;color:#4D4D4D;transform:scaleX(0.92)">AD</div>
<div class="t" style="left:242.5px;width:33.80000000000001px;text-align:center;top:269.03px;font-size:10.2px;color:#4D4D4D;transform:scaleX(0.92)">13Q4</div>
<div class="t" style="left:276.3px;width:46.0px;text-align:center;top:269.03px;font-size:10.2px;color:#4D4D4D;transform:scaleX(0.92)">MEN</div>
<div class="t" style="left:322.3px;width:37.19999999999999px;text-align:center;top:269.03px;font-size:10.2px;color:#4D4D4D;transform:scaleX(0.92)">699</div>
<div class="t" style="left:359.5px;width:47.10000000000002px;text-align:center;top:269.03px;font-size:10.2px;color:#4D4D4D;transform:scaleX(0.92)">1</div>
<div class="t" style="left:406.6px;width:57.39999999999998px;text-align:center;top:269.03px;font-size:10.2px;color:#4D4D4D;transform:scaleX(0.92)">699</div>
<div class="t" style="left:14.3px;width:51.10000000000001px;text-align:center;top:281.10px;font-size:10.2px;color:#4D4D4D;transform:scaleX(0.92)">2018/1/1</div>
<div class="t" style="left:65.4px;width:47.3px;text-align:center;top:281.10px;font-size:10.2px;color:#4D4D4D;transform:scaleX(0.92)">福州</div>
<div class="t" style="left:112.7px;width:81.8px;text-align:center;top:281.10px;font-size:10.2px;color:#4D4D4D;transform:scaleX(0.92)">G70357</div>
<div class="t" style="left:194.5px;width:48.0px;text-align:center;top:281.10px;font-size:10.2px;color:#4D4D4D;transform:scaleX(0.92)">AD</div>
<div class="t" style="left:242.5px;width:33.80000000000001px;text-align:center;top:281.10px;font-size:10.2px;color:#4D4D4D;transform:scaleX(0.92)">14Q1</div>
<div class="t" style="left:276.3px;width:46.0px;text-align:center;top:281.10px;font-size:10.2px;color:#4D4D4D;transform:scaleX(0.92)">MEN</div>
<div class="t" style="left:322.3px;width:37.19999999999999px;text-align:center;top:281.10px;font-size:10.2px;color:#4D4D4D;transform:scaleX(0.92)">429</div>
<div class="t" style="left:359.5px;width:47.10000000000002px;text-align:center;top:281.10px;font-size:10.2px;color:#4D4D4D;transform:scaleX(0.92)">1</div>
<div class="t" style="left:406.6px;width:57.39999999999998px;text-align:center;top:281.10px;font-size:10.2px;color:#4D4D4D;transform:scaleX(0.92)">429</div>
<div class="t" style="left:14.3px;width:51.10000000000001px;text-align:center;top:293.17px;font-size:10.2px;color:#4D4D4D;transform:scaleX(0.92)">2018/1/1</div>
<div class="t" style="left:65.4px;width:47.3px;text-align:center;top:293.17px;font-size:10.2px;color:#4D4D4D;transform:scaleX(0.92)">福州</div>
<div class="t" style="left:112.7px;width:81.8px;text-align:center;top:293.17px;font-size:10.2px;color:#4D4D4D;transform:scaleX(0.92)">G71183</div>
<div class="t" style="left:194.5px;width:48.0px;text-align:center;top:293.17px;font-size:10.2px;color:#4D4D4D;transform:scaleX(0.92)">AD</div>
<div class="t" style="left:242.5px;width:33.80000000000001px;text-align:center;top:293.17px;font-size:10.2px;color:#4D4D4D;transform:scaleX(0.92)">13Q3</div>
<div class="t" style="left:276.3px;width:46.0px;text-align:center;top:293.17px;font-size:10.2px;color:#4D4D4D;transform:scaleX(0.92)">WOMEN</div>
<div class="t" style="left:322.3px;width:37.19999999999999px;text-align:center;top:293.17px;font-size:10.2px;color:#4D4D4D;transform:scaleX(0.92)">369</div>
<div class="t" style="left:359.5px;width:47.10000000000002px;text-align:center;top:293.17px;font-size:10.2px;color:#4D4D4D;transform:scaleX(0.92)">1</div>
<div class="t" style="left:406.6px;width:57.39999999999998px;text-align:center;top:293.17px;font-size:10.2px;color:#4D4D4D;transform:scaleX(0.92)">369</div>
<div class="t" style="left:14.3px;width:51.10000000000001px;text-align:center;top:305.24px;font-size:10.2px;color:#4D4D4D;transform:scaleX(0.92)">2018/1/1</div>
<div class="t" style="left:65.4px;width:47.3px;text-align:center;top:305.24px;font-size:10.2px;color:#4D4D4D;transform:scaleX(0.92)">福州</div>
<div class="t" style="left:112.7px;width:81.8px;text-align:center;top:305.24px;font-size:10.2px;color:#4D4D4D;transform:scaleX(0.92)">G83346</div>
<div class="t" style="left:194.5px;width:48.0px;text-align:center;top:305.24px;font-size:10.2px;color:#4D4D4D;transform:scaleX(0.92)">AD</div>
<div class="t" style="left:242.5px;width:33.80000000000001px;text-align:center;top:305.24px;font-size:10.2px;color:#4D4D4D;transform:scaleX(0.92)">14Q1</div>
<div class="t" style="left:276.3px;width:46.0px;text-align:center;top:305.24px;font-size:10.2px;color:#4D4D4D;transform:scaleX(0.92)">MEN</div>
<div class="t" style="left:322.3px;width:37.19999999999999px;text-align:center;top:305.24px;font-size:10.2px;color:#4D4D4D;transform:scaleX(0.92)">399</div>
<div class="t" style="left:359.5px;width:47.10000000000002px;text-align:center;top:305.24px;font-size:10.2px;color:#4D4D4D;transform:scaleX(0.92)">1</div>
<div class="t" style="left:406.6px;width:57.39999999999998px;text-align:center;top:305.24px;font-size:10.2px;color:#4D4D4D;transform:scaleX(0.92)">399</div>
<div class="t" style="left:14.3px;width:51.10000000000001px;text-align:center;top:317.31px;font-size:10.2px;color:#4D4D4D;transform:scaleX(0.92)">2018/1/1</div>
<div class="t" style="left:65.4px;width:47.3px;text-align:center;top:317.31px;font-size:10.2px;color:#4D4D4D;transform:scaleX(0.92)">福州</div>
<div class="t" style="left:112.7px;width:81.8px;text-align:center;top:317.31px;font-size:10.2px;color:#4D4D4D;transform:scaleX(0.92)">G85411</div>
<div class="t" style="left:194.5px;width:48.0px;text-align:center;top:317.31px;font-size:10.2px;color:#4D4D4D;transform:scaleX(0.92)">AD</div>
<div class="t" style="left:242.5px;width:33.80000000000001px;text-align:center;top:317.31px;font-size:10.2px;color:#4D4D4D;transform:scaleX(0.92)">13Q4</div>
<div class="t" style="left:276.3px;width:46.0px;text-align:center;top:317.31px;font-size:10.2px;color:#4D4D4D;transform:scaleX(0.92)">WOMEN</div>
<div class="t" style="left:322.3px;width:37.19999999999999px;text-align:center;top:317.31px;font-size:10.2px;color:#4D4D4D;transform:scaleX(0.92)">569</div>
<div class="t" style="left:359.5px;width:47.10000000000002px;text-align:center;top:317.31px;font-size:10.2px;color:#4D4D4D;transform:scaleX(0.92)">1</div>
<div class="t" style="left:406.6px;width:57.39999999999998px;text-align:center;top:317.31px;font-size:10.2px;color:#4D4D4D;transform:scaleX(0.92)">569</div>
<div class="t" style="left:14.3px;width:51.10000000000001px;text-align:center;top:329.38px;font-size:10.2px;color:#4D4D4D;transform:scaleX(0.92)">2018/1/1</div>
<div class="t" style="left:65.4px;width:47.3px;text-align:center;top:329.38px;font-size:10.2px;color:#4D4D4D;transform:scaleX(0.92)">福州</div>
<div class="t" style="left:112.7px;width:81.8px;text-align:center;top:329.38px;font-size:10.2px;color:#4D4D4D;transform:scaleX(0.92)">P92261</div>
<div class="t" style="left:194.5px;width:48.0px;text-align:center;top:329.38px;font-size:10.2px;color:#4D4D4D;transform:scaleX(0.92)">AD</div>
<div class="t" style="left:242.5px;width:33.80000000000001px;text-align:center;top:329.38px;font-size:10.2px;color:#4D4D4D;transform:scaleX(0.92)">13Q4</div>
<div class="t" style="left:276.3px;width:46.0px;text-align:center;top:329.38px;font-size:10.2px;color:#4D4D4D;transform:scaleX(0.92)">MEN</div>
<div class="t" style="left:322.3px;width:37.19999999999999px;text-align:center;top:329.38px;font-size:10.2px;color:#4D4D4D;transform:scaleX(0.92)">229</div>
<div class="t" style="left:359.5px;width:47.10000000000002px;text-align:center;top:329.38px;font-size:10.2px;color:#4D4D4D;transform:scaleX(0.92)">1</div>
<div class="t" style="left:406.6px;width:57.39999999999998px;text-align:center;top:329.38px;font-size:10.2px;color:#4D4D4D;transform:scaleX(0.92)">229</div>
<div class="t" style="left:14.3px;width:51.10000000000001px;text-align:center;top:341.45px;font-size:10.2px;color:#4D4D4D;transform:scaleX(0.92)">2018/1/1</div>
<div class="t" style="left:65.4px;width:47.3px;text-align:center;top:341.45px;font-size:10.2px;color:#4D4D4D;transform:scaleX(0.92)">福州</div>
<div class="t" style="left:112.7px;width:81.8px;text-align:center;top:341.45px;font-size:10.2px;color:#4D4D4D;transform:scaleX(0.92)">X12195</div>
<div class="t" style="left:194.5px;width:48.0px;text-align:center;top:341.45px;font-size:10.2px;color:#4D4D4D;transform:scaleX(0.92)">AD</div>
<div class="t" style="left:242.5px;width:33.80000000000001px;text-align:center;top:341.45px;font-size:10.2px;color:#4D4D4D;transform:scaleX(0.92)">13Q4</div>
<div class="t" style="left:276.3px;width:46.0px;text-align:center;top:341.45px;font-size:10.2px;color:#4D4D4D;transform:scaleX(0.92)">MEN</div>
<div class="t" style="left:322.3px;width:37.19999999999999px;text-align:center;top:341.45px;font-size:10.2px;color:#4D4D4D;transform:scaleX(0.92)">399</div>
<div class="t" style="left:359.5px;width:47.10000000000002px;text-align:center;top:341.45px;font-size:10.2px;color:#4D4D4D;transform:scaleX(0.92)">1</div>
<div class="t" style="left:406.6px;width:57.39999999999998px;text-align:center;top:341.45px;font-size:10.2px;color:#4D4D4D;transform:scaleX(0.92)">399</div>
<div class="t" style="left:14.3px;width:51.10000000000001px;text-align:center;top:353.52px;font-size:10.2px;color:#4D4D4D;transform:scaleX(0.92)">2018/1/1</div>
<div class="t" style="left:65.4px;width:47.3px;text-align:center;top:353.52px;font-size:10.2px;color:#4D4D4D;transform:scaleX(0.92)">福州</div>
<div class="t" style="left:112.7px;width:81.8px;text-align:center;top:353.52px;font-size:10.2px;color:#4D4D4D;transform:scaleX(0.92)">X20551</div>
<div class="t" style="left:194.5px;width:48.0px;text-align:center;top:353.52px;font-size:10.2px;color:#4D4D4D;transform:scaleX(0.92)">AD</div>
<div class="t" style="left:242.5px;width:33.80000000000001px;text-align:center;top:353.52px;font-size:10.2px;color:#4D4D4D;transform:scaleX(0.92)">13Q3</div>
<div class="t" style="left:276.3px;width:46.0px;text-align:center;top:353.52px;font-size:10.2px;color:#4D4D4D;transform:scaleX(0.92)">MEN</div>
<div class="t" style="left:322.3px;width:37.19999999999999px;text-align:center;top:353.52px;font-size:10.2px;color:#4D4D4D;transform:scaleX(0.92)">329</div>
<div class="t" style="left:359.5px;width:47.10000000000002px;text-align:center;top:353.52px;font-size:10.2px;color:#4D4D4D;transform:scaleX(0.92)">1</div>
<div class="t" style="left:406.6px;width:57.39999999999998px;text-align:center;top:353.52px;font-size:10.2px;color:#4D4D4D;transform:scaleX(0.92)">329</div>
<div class="t" style="left:14.3px;width:51.10000000000001px;text-align:center;top:365.59px;font-size:10.2px;color:#4D4D4D;transform:scaleX(0.92)">2018/1/1</div>
<div class="t" style="left:65.4px;width:47.3px;text-align:center;top:365.59px;font-size:10.2px;color:#4D4D4D;transform:scaleX(0.92)">福州</div>
<div class="t" style="left:112.7px;width:81.8px;text-align:center;top:365.59px;font-size:10.2px;color:#4D4D4D;transform:scaleX(0.92)">X23567</div>
<div class="t" style="left:194.5px;width:48.0px;text-align:center;top:365.59px;font-size:10.2px;color:#4D4D4D;transform:scaleX(0.92)">AD</div>
<div class="t" style="left:242.5px;width:33.80000000000001px;text-align:center;top:365.59px;font-size:10.2px;color:#4D4D4D;transform:scaleX(0.92)">14Q1</div>
<div class="t" style="left:276.3px;width:46.0px;text-align:center;top:365.59px;font-size:10.2px;color:#4D4D4D;transform:scaleX(0.92)">MEN</div>
<div class="t" style="left:322.3px;width:37.19999999999999px;text-align:center;top:365.59px;font-size:10.2px;color:#4D4D4D;transform:scaleX(0.92)">429</div>
<div class="t" style="left:359.5px;width:47.10000000000002px;text-align:center;top:365.59px;font-size:10.2px;color:#4D4D4D;transform:scaleX(0.92)">1</div>
<div class="t" style="left:406.6px;width:57.39999999999998px;text-align:center;top:365.59px;font-size:10.2px;color:#4D4D4D;transform:scaleX(0.92)">429</div>
<div class="t" style="left:14.3px;width:51.10000000000001px;text-align:center;top:377.66px;font-size:10.2px;color:#4D4D4D;transform:scaleX(0.92)">2018/1/1</div>
<div class="t" style="left:65.4px;width:47.3px;text-align:center;top:377.66px;font-size:10.2px;color:#4D4D4D;transform:scaleX(0.92)">泉州</div>
<div class="t" style="left:112.7px;width:81.8px;text-align:center;top:377.66px;font-size:10.2px;color:#4D4D4D;transform:scaleX(0.92)">182719-523</div>
<div class="t" style="left:194.5px;width:48.0px;text-align:center;top:377.66px;font-size:10.2px;color:#4D4D4D;transform:scaleX(0.92)">EN</div>
<div class="t" style="left:242.5px;width:33.80000000000001px;text-align:center;top:377.66px;font-size:10.2px;color:#4D4D4D;transform:scaleX(0.92)">13FW</div>
<div class="t" style="left:276.3px;width:46.0px;text-align:center;top:377.66px;font-size:10.2px;color:#4D4D4D;transform:scaleX(0.92)">MEN</div>
<div class="t" style="left:322.3px;width:37.19999999999999px;text-align:center;top:377.66px;font-size:10.2px;color:#4D4D4D;transform:scaleX(0.92)">79</div>
<div class="t" style="left:359.5px;width:47.10000000000002px;text-align:center;top:377.66px;font-size:10.2px;color:#4D4D4D;transform:scaleX(0.92)">1</div>
<div class="t" style="left:406.6px;width:57.39999999999998px;text-align:center;top:377.66px;font-size:10.2px;color:#4D4D4D;transform:scaleX(0.92)">79</div>
<div class="t" style="left:14.3px;width:51.10000000000001px;text-align:center;top:389.73px;font-size:10.2px;color:#4D4D4D;transform:scaleX(0.92)">2018/1/1</div>
<div class="t" style="left:65.4px;width:47.3px;text-align:center;top:389.73px;font-size:10.2px;color:#4D4D4D;transform:scaleX(0.92)">泉州</div>
<div class="t" style="left:112.7px;width:81.8px;text-align:center;top:389.73px;font-size:10.2px;color:#4D4D4D;transform:scaleX(0.92)">182721-050</div>
<div class="t" style="left:194.5px;width:48.0px;text-align:center;top:389.73px;font-size:10.2px;color:#4D4D4D;transform:scaleX(0.92)">EN</div>
<div class="t" style="left:242.5px;width:33.80000000000001px;text-align:center;top:389.73px;font-size:10.2px;color:#4D4D4D;transform:scaleX(0.92)">13FW</div>
<div class="t" style="left:276.3px;width:46.0px;text-align:center;top:389.73px;font-size:10.2px;color:#4D4D4D;transform:scaleX(0.92)">MEN</div>
<div class="t" style="left:322.3px;width:37.19999999999999px;text-align:center;top:389.73px;font-size:10.2px;color:#4D4D4D;transform:scaleX(0.92)">99</div>
<div class="t" style="left:359.5px;width:47.10000000000002px;text-align:center;top:389.73px;font-size:10.2px;color:#4D4D4D;transform:scaleX(0.92)">1</div>
<div class="t" style="left:406.6px;width:57.39999999999998px;text-align:center;top:389.73px;font-size:10.2px;color:#4D4D4D;transform:scaleX(0.92)">99</div>
<div class="t" style="left:14.3px;width:51.10000000000001px;text-align:center;top:401.80px;font-size:10.2px;color:#4D4D4D;transform:scaleX(0.92)">2018/1/1</div>
<div class="t" style="left:65.4px;width:47.3px;text-align:center;top:401.80px;font-size:10.2px;color:#4D4D4D;transform:scaleX(0.92)">泉州</div>
<div class="t" style="left:112.7px;width:81.8px;text-align:center;top:401.80px;font-size:10.2px;color:#4D4D4D;transform:scaleX(0.92)">204266-021</div>
<div class="t" style="left:194.5px;width:48.0px;text-align:center;top:401.80px;font-size:10.2px;color:#4D4D4D;transform:scaleX(0.92)">PRO</div>
<div class="t" style="left:242.5px;width:33.80000000000001px;text-align:center;top:401.80px;font-size:10.2px;color:#4D4D4D;transform:scaleX(0.92)">13FW</div>
<div class="t" style="left:276.3px;width:46.0px;text-align:center;top:401.80px;font-size:10.2px;color:#4D4D4D;transform:scaleX(0.92)">MEN</div>
<div class="t" style="left:322.3px;width:37.19999999999999px;text-align:center;top:401.80px;font-size:10.2px;color:#4D4D4D;transform:scaleX(0.92)">239</div>
<div class="t" style="left:359.5px;width:47.10000000000002px;text-align:center;top:401.80px;font-size:10.2px;color:#4D4D4D;transform:scaleX(0.92)">1</div>
<div class="t" style="left:406.6px;width:57.39999999999998px;text-align:center;top:401.80px;font-size:10.2px;color:#4D4D4D;transform:scaleX(0.92)">239</div>
<div class="ab" style="left:14.3px;top:157.7px;width:449.7px;height:1px;background:#4F93D8"></div>
<div class="ab" style="left:14.3px;top:169.76999999999998px;width:449.7px;height:1px;background:#B2C9D6"></div>
<div class="ab" style="left:14.3px;top:181.83999999999997px;width:449.7px;height:1px;background:#B2C9D6"></div>
<div class="ab" style="left:14.3px;top:193.91px;width:449.7px;height:1px;background:#B2C9D6"></div>
<div class="ab" style="left:14.3px;top:205.98px;width:449.7px;height:1px;background:#B2C9D6"></div>
<div class="ab" style="left:14.3px;top:218.04999999999998px;width:449.7px;height:1px;background:#B2C9D6"></div>
<div class="ab" style="left:14.3px;top:230.12px;width:449.7px;height:1px;background:#B2C9D6"></div>
<div class="ab" style="left:14.3px;top:242.19px;width:449.7px;height:1px;background:#B2C9D6"></div>
<div class="ab" style="left:14.3px;top:254.26px;width:449.7px;height:1px;background:#B2C9D6"></div>
<div class="ab" style="left:14.3px;top:266.33px;width:449.7px;height:1px;background:#B2C9D6"></div>
<div class="ab" style="left:14.3px;top:278.4px;width:449.7px;height:1px;background:#B2C9D6"></div>
<div class="ab" style="left:14.3px;top:290.47px;width:449.7px;height:1px;background:#B2C9D6"></div>
<div class="ab" style="left:14.3px;top:302.53999999999996px;width:449.7px;height:1px;background:#B2C9D6"></div>
<div class="ab" style="left:14.3px;top:314.61px;width:449.7px;height:1px;background:#B2C9D6"></div>
<div class="ab" style="left:14.3px;top:326.68px;width:449.7px;height:1px;background:#B2C9D6"></div>
<div class="ab" style="left:14.3px;top:338.75px;width:449.7px;height:1px;background:#B2C9D6"></div>
<div class="ab" style="left:14.3px;top:350.82px;width:449.7px;height:1px;background:#B2C9D6"></div>
<div class="ab" style="left:14.3px;top:362.89px;width:449.7px;height:1px;background:#B2C9D6"></div>
<div class="ab" style="left:14.3px;top:374.96px;width:449.7px;height:1px;background:#B2C9D6"></div>
<div class="ab" style="left:14.3px;top:387.03px;width:449.7px;height:1px;background:#B2C9D6"></div>
<div class="ab" style="left:14.3px;top:399.1px;width:449.7px;height:1px;background:#B2C9D6"></div>
<div class="ab" style="left:14.3px;top:411.16999999999996px;width:449.7px;height:1px;background:#B2C9D6"></div>
<div class="ab" style="left:64.9px;top:146.0px;width:1px;height:12.199999999999989px;background:#4A8FD8"></div>
<div class="ab" style="left:64.9px;top:158.2px;width:1px;height:260px;background:#8FCCD4"></div>
<div class="ab" style="left:112.2px;top:146.0px;width:1px;height:12.199999999999989px;background:#4A8FD8"></div>
<div class="ab" style="left:112.2px;top:158.2px;width:1px;height:260px;background:#8FCCD4"></div>
<div class="ab" style="left:194.0px;top:146.0px;width:1px;height:12.199999999999989px;background:#4A8FD8"></div>
<div class="ab" style="left:194.0px;top:158.2px;width:1px;height:260px;background:#8FCCD4"></div>
<div class="ab" style="left:242.0px;top:146.0px;width:1px;height:12.199999999999989px;background:#4A8FD8"></div>
<div class="ab" style="left:242.0px;top:158.2px;width:1px;height:260px;background:#8FCCD4"></div>
<div class="ab" style="left:275.8px;top:146.0px;width:1px;height:12.199999999999989px;background:#4A8FD8"></div>
<div class="ab" style="left:275.8px;top:158.2px;width:1px;height:260px;background:#8FCCD4"></div>
<div class="ab" style="left:321.8px;top:146.0px;width:1px;height:12.199999999999989px;background:#4A8FD8"></div>
<div class="ab" style="left:321.8px;top:158.2px;width:1px;height:260px;background:#8FCCD4"></div>
<div class="ab" style="left:359.0px;top:146.0px;width:1px;height:12.199999999999989px;background:#4A8FD8"></div>
<div class="ab" style="left:359.0px;top:158.2px;width:1px;height:260px;background:#8FCCD4"></div>
<div class="ab" style="left:406.1px;top:146.0px;width:1px;height:12.199999999999989px;background:#4A8FD8"></div>
<div class="ab" style="left:406.1px;top:158.2px;width:1px;height:260px;background:#8FCCD4"></div>
<div class="ab" style="left:463.5px;top:146.0px;width:1px;height:12.199999999999989px;background:#4A8FD8"></div>
<div class="ab" style="left:463.5px;top:158.2px;width:1px;height:260px;background:#B4CCD6"></div>
<svg class="ab" style="left:405px;top:0" width="20" height="18" viewBox="405 0 20 18"><path d="M413.2 11.4c0-1.4-1.9-2.4-1.9-4.4a3.5 3.5 0 0 1 7 0c0 2-1.9 3-1.9 4.4z" fill="none" stroke="#F0F0F0" stroke-width="0.75"/><path d="M413.3 12.6h3M413.6 13.7h2.4" stroke="#F0F0F0" stroke-width="0.7"/></svg>
<svg class="ab" style="left:580px;top:380px" width="14" height="18" viewBox="580 380 14 18"><path d="M583.4 383.3v10.2l2.3-2.2 1.6 3.3 1.3-0.6-1.5-3.2h3.1z" fill="#fff" stroke="#707070" stroke-width="0.7" stroke-linejoin="round"/></svg>
</body></html>
